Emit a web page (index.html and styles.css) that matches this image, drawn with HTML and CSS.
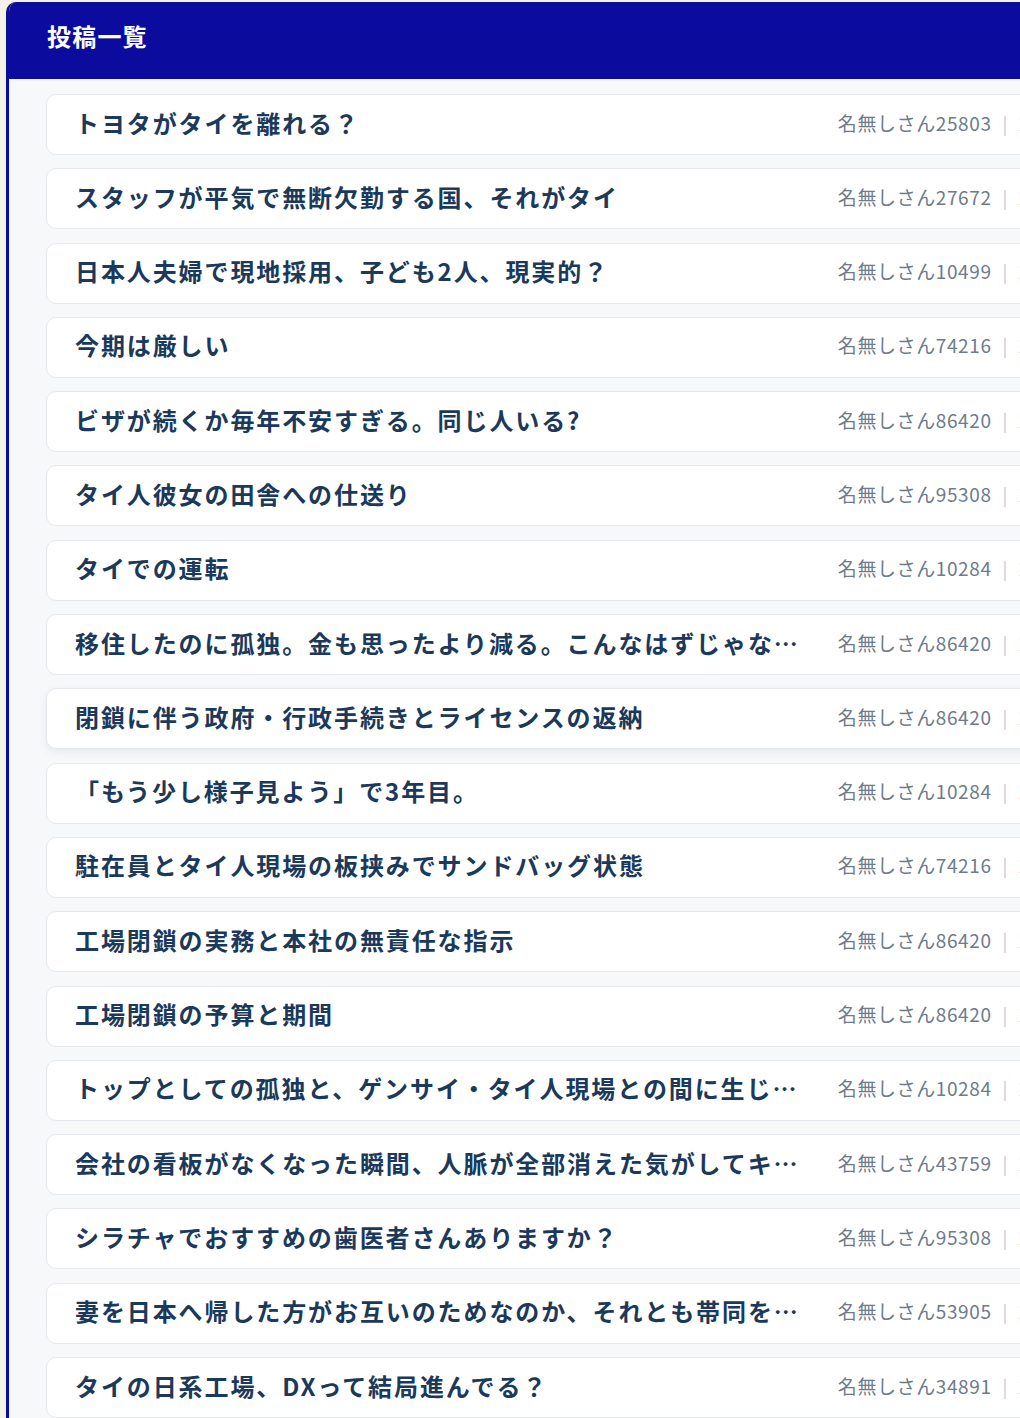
FILE: index.html
```html
<!DOCTYPE html>
<html lang="ja">
<head>
    <meta charset="UTF-8">
    <meta name="viewport" content="width=device-width, initial-scale=1.0">
    <title>投稿一覧</title>
    <link rel="stylesheet" href="styles.css">
</head>
<body>
    <div class="board">
        <div class="board-header">
            <h1>投稿一覧</h1>
        </div>
        <ul class="post-list">
            <li class="post"><span class="post-title">トヨタがタイを離れる？</span><span class="post-meta"><span class="post-author">名無しさん25803</span><span class="sep">|</span><span class="post-date">2025/06/14</span></span></li>
            <li class="post"><span class="post-title">スタッフが平気で無断欠勤する国、それがタイ</span><span class="post-meta"><span class="post-author">名無しさん27672</span><span class="sep">|</span><span class="post-date">2025/06/13</span></span></li>
            <li class="post"><span class="post-title">日本人夫婦で現地採用、子ども2人、現実的？</span><span class="post-meta"><span class="post-author">名無しさん10499</span><span class="sep">|</span><span class="post-date">2025/06/12</span></span></li>
            <li class="post"><span class="post-title">今期は厳しい</span><span class="post-meta"><span class="post-author">名無しさん74216</span><span class="sep">|</span><span class="post-date">2025/06/11</span></span></li>
            <li class="post"><span class="post-title">ビザが続くか毎年不安すぎる。同じ人いる?</span><span class="post-meta"><span class="post-author">名無しさん86420</span><span class="sep">|</span><span class="post-date">2025/06/10</span></span></li>
            <li class="post"><span class="post-title">タイ人彼女の田舎への仕送り</span><span class="post-meta"><span class="post-author">名無しさん95308</span><span class="sep">|</span><span class="post-date">2025/06/09</span></span></li>
            <li class="post"><span class="post-title">タイでの運転</span><span class="post-meta"><span class="post-author">名無しさん10284</span><span class="sep">|</span><span class="post-date">2025/06/08</span></span></li>
            <li class="post"><span class="post-title">移住したのに孤独。金も思ったより減る。こんなはずじゃなかった</span><span class="post-meta"><span class="post-author">名無しさん86420</span><span class="sep">|</span><span class="post-date">2025/06/07</span></span></li>
            <li class="post is-hover"><span class="post-title">閉鎖に伴う政府・行政手続きとライセンスの返納</span><span class="post-meta"><span class="post-author">名無しさん86420</span><span class="sep">|</span><span class="post-date">2025/06/06</span></span></li>
            <li class="post"><span class="post-title">「もう少し様子見よう」で3年目。</span><span class="post-meta"><span class="post-author">名無しさん10284</span><span class="sep">|</span><span class="post-date">2025/06/05</span></span></li>
            <li class="post"><span class="post-title">駐在員とタイ人現場の板挟みでサンドバッグ状態</span><span class="post-meta"><span class="post-author">名無しさん74216</span><span class="sep">|</span><span class="post-date">2025/06/04</span></span></li>
            <li class="post"><span class="post-title">工場閉鎖の実務と本社の無責任な指示</span><span class="post-meta"><span class="post-author">名無しさん86420</span><span class="sep">|</span><span class="post-date">2025/06/03</span></span></li>
            <li class="post"><span class="post-title">工場閉鎖の予算と期間</span><span class="post-meta"><span class="post-author">名無しさん86420</span><span class="sep">|</span><span class="post-date">2025/06/02</span></span></li>
            <li class="post"><span class="post-title">トップとしての孤独と、ゲンサイ・タイ人現場との間に生じる溝</span><span class="post-meta"><span class="post-author">名無しさん10284</span><span class="sep">|</span><span class="post-date">2025/06/01</span></span></li>
            <li class="post"><span class="post-title">会社の看板がなくなった瞬間、人脈が全部消えた気がしてキツい</span><span class="post-meta"><span class="post-author">名無しさん43759</span><span class="sep">|</span><span class="post-date">2025/05/31</span></span></li>
            <li class="post"><span class="post-title">シラチャでおすすめの歯医者さんありますか？</span><span class="post-meta"><span class="post-author">名無しさん95308</span><span class="sep">|</span><span class="post-date">2025/05/30</span></span></li>
            <li class="post"><span class="post-title">妻を日本へ帰した方がお互いのためなのか、それとも帯同を続けるべきか</span><span class="post-meta"><span class="post-author">名無しさん53905</span><span class="sep">|</span><span class="post-date">2025/05/29</span></span></li>
            <li class="post"><span class="post-title">タイの日系工場、DXって結局進んでる？</span><span class="post-meta"><span class="post-author">名無しさん34891</span><span class="sep">|</span><span class="post-date">2025/05/28</span></span></li>
        </ul>
    </div>
</body>
</html>
```

FILE: styles.css
```css
html, body {
    overflow-x: hidden;
}
body {
    margin: 0;
    padding: 2px 0 0 6px;
    background-color: #f4f1ea;
    font-family: "Noto Sans CJK JP", "Noto Sans", sans-serif;
}
.board {
    width: 1216px;
    background-color: #f6f8fa;
    border-left: 3px solid #0b0b9e;
    border-top-left-radius: 10px;
    overflow: hidden;
}
.board-header {
    height: 77px;
    background-color: #0b0b9e;
    display: flex;
    align-items: center;
    padding-left: 38px;
}
.board-header h1 {
    margin: 0 0 10px;
    color: #fff;
    font-size: 24px;
    font-weight: 700;
    letter-spacing: 1.2px;
    line-height: 30px;
}
.post-list {
    list-style: none;
    margin: 0;
    padding: 15px 37px 0;
}
.post {
    display: flex;
    align-items: center;
    height: 61px;
    box-sizing: border-box;
    margin-bottom: 13.3px;
    padding: 0 28px 4px;
    background-color: #fff;
    border: 1px solid #e5e8ed;
    border-radius: 10px;
}
.post.is-hover {
    box-shadow: 0 3px 10px rgba(20, 30, 60, 0.07);
}
.post-title {
    flex: 1;
    min-width: 0;
    white-space: nowrap;
    overflow: hidden;
    text-overflow: ellipsis;
    color: #1a395b;
    font-size: 24px;
    font-weight: 700;
    letter-spacing: 1.9px;
    line-height: 32px;
}
.post-meta {
    flex: none;
    display: flex;
    align-items: center;
    margin-left: 30px;
    color: #6d7b8b;
    font-size: 19px;
    letter-spacing: 0.6px;
    line-height: 26px;
}
.sep {
    margin: 0 11px;
    color: #c3cad3;
    font-size: 18px;
}
.post-date {
    width: 140px;
}
```
